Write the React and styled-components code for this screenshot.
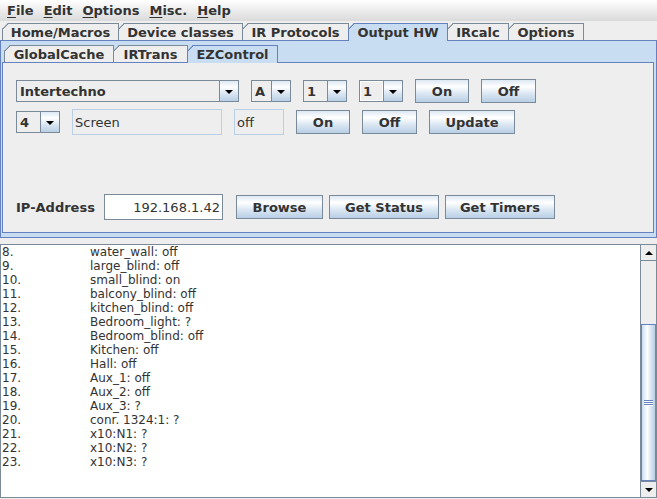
import React from "react";
import styled, { createGlobalStyle } from "styled-components";

const GlobalStyle = createGlobalStyle`
  html, body {
    margin: 0;
    padding: 0;
    background: #eeeeee;
  }
  body {
    font-family: "DejaVu Sans", sans-serif;
    color: #333333;
  }
  * {
    box-sizing: border-box;
  }
`;

const Window = styled.div`
  width: 657px;
  height: 499px;
  display: flex;
  flex-direction: column;
  background: #eeeeee;
  overflow: hidden;
`;

const MenuBar = styled.div`
  height: 21px;
  flex: none;
  display: flex;
  align-items: center;
  gap: 10px;
  padding-left: 7px;
  background: linear-gradient(#ffffff, #dadada);
  font-size: 13px;
  font-weight: bold;
  color: #333333;
`;

const MenuItem = styled.span`
  white-space: pre;
`;

const Mnemonic = styled.span`
  text-decoration: underline;
  text-underline-offset: 2px;
`;

const TabRow = styled.div`
  position: relative;
  z-index: 1;
  height: 17px;
  flex: none;
  display: flex;
  margin-top: ${(p) => p.$top}px;
  padding-left: ${(p) => p.$inset}px;
`;

const Tab = styled.div`
  position: relative;
  width: ${(p) => p.$width}px;
  display: flex;
  align-items: center;
  justify-content: center;
  margin-bottom: ${(p) => (p.$active ? -1 : 0)}px;
  z-index: ${(p) => (p.$active ? 2 : 0)};
  border: 1px solid ${(p) => (p.$active ? "#6382bf" : "#7a8a99")};
  border-bottom: none;
  background: ${(p) => (p.$active ? "#c8ddf2" : "#eeeeee")};
  clip-path: polygon(0 6px, 6px 0, 100% 0, 100% 100%, 0 100%);
  font-size: 13px;
  font-weight: bold;
  color: #333333;
  white-space: pre;

  & + & {
    margin-left: -1px;
  }

  &::before {
    content: "";
    position: absolute;
    left: -1px;
    top: -1px;
    width: 6px;
    height: 6px;
    background: linear-gradient(
      to bottom right,
      transparent 48%,
      ${(p) => (p.$active ? "#6382bf" : "#7a8a99")} 48%,
      ${(p) => (p.$active ? "#6382bf" : "#7a8a99")} 64%,
      transparent 64%
    );
  }
`;

const OuterContent = styled.div`
  height: 198px;
  flex: none;
  display: flex;
  flex-direction: column;
  border: 1px solid #6382bf;
  background: #c8ddf2;
  padding: 4px 2px 4px 1px;
`;

const InnerContent = styled.div`
  flex: 1;
  display: flex;
  flex-direction: column;
  border: 1px solid #6382bf;
  background: #eeeeee;
  padding: 16px 0 12px 13px;
`;

const FormRow = styled.div`
  display: flex;
  align-items: center;
  gap: 12px;
  height: ${(p) => p.$height}px;
  margin-top: ${(p) => p.$top || 0}px;
`;

const IpRow = styled(FormRow)`
  margin-top: auto;
  gap: 6px;
`;

const Combo = styled.div`
  width: ${(p) => p.$width}px;
  height: 22px;
  flex: none;
  display: flex;
  border: 1px solid #7a8a99;
`;

const ComboValue = styled.div`
  flex: 1;
  display: flex;
  align-items: center;
  padding-left: 3px;
  background: #eeeeee;
  font-size: 13px;
  font-weight: bold;
  box-shadow: ${(p) => (p.$focused ? "inset 0 0 0 1px #ffffff" : "none")};
`;

const ComboArrow = styled.div`
  width: 19px;
  flex: none;
  display: flex;
  align-items: center;
  justify-content: center;
  border-left: 1px solid #7a8a99;
  background: linear-gradient(#dde8f3 0%, #ffffff 30%, #dde8f3 60%, #b8cfe5 100%);

  &::after {
    content: "";
    border-left: 4.5px solid transparent;
    border-right: 4.5px solid transparent;
    border-top: 4px solid #000000;
    margin-top: 1px;
  }
`;

const Button = styled.div`
  width: ${(p) => p.$width}px;
  height: 24px;
  flex: none;
  display: flex;
  align-items: center;
  justify-content: center;
  border: 1px solid #7a8a99;
  background: linear-gradient(#dde8f3 0%, #ffffff 30%, #dde8f3 60%, #b8cfe5 100%);
  font-size: 13px;
  font-weight: bold;
  color: #333333;
  white-space: pre;
`;

const Field = styled.div`
  width: ${(p) => p.$width}px;
  height: 26px;
  flex: none;
  display: flex;
  align-items: center;
  justify-content: ${(p) => (p.$right ? "flex-end" : "flex-start")};
  margin-right: ${(p) => p.$after || 0}px;
  padding: 0 2px;
  border: 1px solid ${(p) => (p.$disabled ? "#b8cfe5" : "#7a8a99")};
  background: ${(p) => (p.$disabled ? "#eeeeee" : "#ffffff")};
  font-size: 13px;
  color: #333333;
`;

const Label = styled.div`
  width: 82px;
  flex: none;
  font-size: 13px;
  font-weight: bold;
  color: #333333;
`;

const Gap = styled.div`
  height: 6px;
  flex: none;
`;

const ListPane = styled.div`
  height: 254px;
  flex: none;
  display: flex;
  border: 1px solid #7a8a99;
  background: #ffffff;
`;

const ListText = styled.div`
  flex: 1;
  overflow: hidden;
  padding-left: 1px;
  font-size: 12px;
  line-height: 14px;
  color: #333333;
`;

const ListLine = styled.div`
  display: flex;
  white-space: pre;
`;

const LineNo = styled.span`
  width: 88px;
  flex: none;
`;

const ScrollBar = styled.div`
  width: 16px;
  flex: none;
  display: flex;
  flex-direction: column;
  border-left: 1px solid #7a8a99;
  background: #eeeeee;
`;

const ScrollButton = styled.div`
  height: 16px;
  flex: none;
  display: flex;
  align-items: center;
  justify-content: center;
  background: #eeeeee;
  border-top: ${(p) => (p.$down ? "1px solid #7a8a99" : "none")};
  border-bottom: ${(p) => (p.$down ? "none" : "1px solid #7a8a99")};

  &::after {
    content: "";
    border-left: 4.5px solid transparent;
    border-right: 4.5px solid transparent;
    border-top: ${(p) => (p.$down ? "4px solid #000000" : "none")};
    border-bottom: ${(p) => (p.$down ? "none" : "4px solid #000000")};
  }
`;

const Track = styled.div`
  flex: 1;
  display: flex;
  flex-direction: column;
  justify-content: flex-start;
`;

const Thumb = styled.div`
  flex: none;
  display: flex;
  align-items: center;
  justify-content: center;
  border: 1px solid #6382bf;
  border-right-color: #7a8a99;
  background: linear-gradient(to right, #c8ddf2 0%, #ffffff 40%, #dde8f3 65%, #b8cfe5 100%);
`;

const Grip = styled.div`
  width: 9px;
  height: 6px;
  background: repeating-linear-gradient(#6382bf 0 1px, #ffffff 1px 2px);
`;

const menus = [
  ["F", "ile"],
  ["E", "dit"],
  ["O", "ptions"],
  ["M", "isc."],
  ["H", "elp"],
];

const outerTabs = [
  { label: "Home/Macros", width: 117 },
  { label: "Device classes", width: 125 },
  { label: "IR Protocols", width: 107 },
  { label: "Output HW", width: 100, active: true },
  { label: "IRcalc", width: 62 },
  { label: "Options", width: 76 },
];

const innerTabs = [
  { label: "GlobalCache", width: 110 },
  { label: "IRTrans", width: 75 },
  { label: "EZControl", width: 91, active: true },
];

const devices = [
  ["8.", "water_wall: off"],
  ["9.", "large_blind: off"],
  ["10.", "small_blind: on"],
  ["11.", "balcony_blind: off"],
  ["12.", "kitchen_blind: off"],
  ["13.", "Bedroom_light: ?"],
  ["14.", "Bedroom_blind: off"],
  ["15.", "Kitchen: off"],
  ["16.", "Hall: off"],
  ["17.", "Aux_1: off"],
  ["18.", "Aux_2: off"],
  ["19.", "Aux_3: ?"],
  ["20.", "conr. 1324:1: ?"],
  ["21.", "x10:N1: ?"],
  ["22.", "x10:N2: ?"],
  ["23.", "x10:N3: ?"],
];

const thumbOffset = 63;
const thumbHeight = 157;

const App = () => {
  return (
    <>
      <GlobalStyle />
      <Window>
        <MenuBar>
          {menus.map(([key, rest]) => (
            <MenuItem key={key + rest}>
              <Mnemonic>{key}</Mnemonic>
              {rest}
            </MenuItem>
          ))}
        </MenuBar>

        <TabRow $top={2} $inset={2}>
          {outerTabs.map((t) => (
            <Tab key={t.label} $width={t.width} $active={t.active}>
              {t.label}
            </Tab>
          ))}
        </TabRow>

        <OuterContent>
          <TabRow $top={0} $inset={2}>
            {innerTabs.map((t) => (
              <Tab key={t.label} $width={t.width} $active={t.active}>
                {t.label}
              </Tab>
            ))}
          </TabRow>
          <InnerContent>
            <FormRow $height={24}>
              <Combo $width={223}>
                <ComboValue>Intertechno</ComboValue>
                <ComboArrow />
              </Combo>
              <Combo $width={40}>
                <ComboValue>A</ComboValue>
                <ComboArrow />
              </Combo>
              <Combo $width={44}>
                <ComboValue>1</ComboValue>
                <ComboArrow />
              </Combo>
              <Combo $width={44}>
                <ComboValue $focused>1</ComboValue>
                <ComboArrow />
              </Combo>
              <Button $width={54}>On</Button>
              <Button $width={55}>Off</Button>
            </FormRow>
            <FormRow $height={26} $top={6}>
              <Combo $width={44}>
                <ComboValue>4</ComboValue>
                <ComboArrow />
              </Combo>
              <Field $width={150} $disabled>
                Screen
              </Field>
              <Field $width={50} $disabled>
                off
              </Field>
              <Button $width={54}>On</Button>
              <Button $width={55}>Off</Button>
              <Button $width={86}>Update</Button>
            </FormRow>
            <IpRow $height={26}>
              <Label>IP-Address</Label>
              <Field $width={119} $right $after={7}>
                192.168.1.42
              </Field>
              <Button $width={87}>Browse</Button>
              <Button $width={110}>Get Status</Button>
              <Button $width={110}>Get Timers</Button>
            </IpRow>
          </InnerContent>
        </OuterContent>

        <Gap />

        <ListPane>
          <ListText>
            {devices.map(([no, text]) => (
              <ListLine key={no}>
                <LineNo>{no}</LineNo>
                {text}
              </ListLine>
            ))}
          </ListText>
          <ScrollBar>
            <ScrollButton />
            <Track>
              <Thumb style={{ marginTop: thumbOffset, height: thumbHeight }}>
                <Grip />
              </Thumb>
            </Track>
            <ScrollButton $down />
          </ScrollBar>
        </ListPane>
      </Window>
    </>
  );
};

export default App;
